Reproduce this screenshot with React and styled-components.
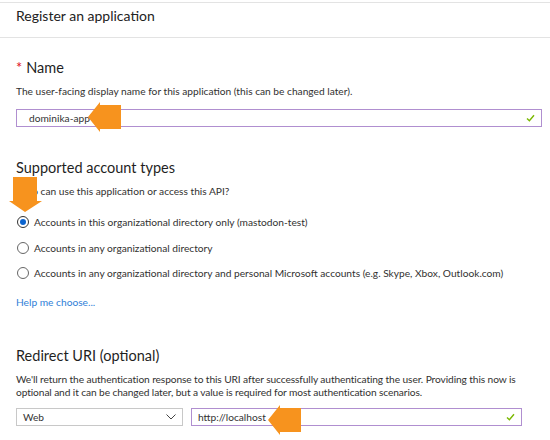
import styled, { createGlobalStyle } from 'styled-components'

const GlobalStyle = createGlobalStyle`
  body {
    margin: 0;
    background: #fff;
    font-family: Lato, "Liberation Sans", sans-serif;
    color: #323130;
  }
`

const Page = styled.div`
  position: relative;
  width: 550px;
  height: 440px;
  overflow: hidden;
`

const Header = styled.div`
  margin-top: 2px;
  height: 36px;
  border-top: 1px solid #e3e3e3;
  border-bottom: 1px solid #e3e3e3;
  padding: 3px 16px 0;
  box-sizing: border-box;
  font-size: 14px;
  line-height: 20px;
  color: #222;
`

const Content = styled.div`
  padding: 0 16px;
`

const SectionTitle = styled.h2`
  margin: ${p => p.$top}px 0 0;
  font-size: 14.5px;
  font-weight: 400;
  line-height: 22px;
  color: #1f1f1f;

  span {
    color: #e00b1c;
    margin-right: 4px;
  }
`

const Text = styled.p`
  margin: ${p => p.$top || 6}px 0 0;
  font-size: 10.2px;
  line-height: 13px;
  letter-spacing: ${p => p.$tight ? '-0.1px' : '0'};
  white-space: nowrap;
`

const Field = styled.div`
  margin-top: ${p => p.$top}px;
  width: ${p => p.$width}px;
  height: 18px;
  box-sizing: border-box;
  border: 1px solid ${p => (p.$valid ? '#b08fd0' : '#c8c8c8')};
  display: flex;
  align-items: center;
  justify-content: space-between;
  padding: 0 6px 0 ${p => p.$pad || 6}px;
  font-size: 10.2px;
  color: #333;
  background: #fff;
`

const RadioList = styled.div`
  margin-top: 16px;
  display: flex;
  flex-direction: column;
  gap: 9.5px;
`

const RadioRow = styled.label`
  display: flex;
  align-items: center;
  gap: 5px;
  height: 16px;
  font-size: 10.2px;
  white-space: nowrap;
`

const RadioCircle = styled.span`
  width: 12px;
  height: 12px;
  box-sizing: border-box;
  border-radius: 50%;
  border: 1px solid ${p => (p.$checked ? '#333' : '#666')};
  margin-left: 1px;
  display: flex;
  align-items: center;
  justify-content: center;

  &::after {
    content: "";
    width: 6px;
    height: 6px;
    border-radius: 50%;
    background: ${p => (p.$checked ? '#0b63ce' : 'transparent')};
  }
`

const Link = styled.a`
  display: block;
  margin-top: 14px;
  font-size: 10.2px;
  line-height: 14px;
  color: #2f80d8;
  text-decoration: none;
`

const Row = styled.div`
  display: flex;
  gap: 8px;
  margin-top: 9px;
`

const Arrow = styled.svg`
  position: absolute;
  left: ${p => p.$x}px;
  top: ${p => p.$y}px;
`

const ORANGE = '#f7931e'

function Check() {
  return (
    <svg width="9" height="8" viewBox="0 0 9 8">
      <path d="M1 4.5 L3.4 6.8 L8 1.2" fill="none" stroke="#7ab800" strokeWidth="1.4" />
    </svg>
  )
}

function Chevron() {
  return (
    <svg width="10" height="6" viewBox="0 0 10 6">
      <path d="M0.5 0.5 L5 5 L9.5 0.5" fill="none" stroke="#444" strokeWidth="1" />
    </svg>
  )
}

function LeftArrow({ x, y }) {
  return (
    <Arrow $x={x} $y={y} width="34" height="32" viewBox="0 0 34 32">
      <polygon points="0,16 12,1 12,4 33,4 33,28 12,28 12,31" fill={ORANGE} />
    </Arrow>
  )
}

function DownArrow({ x, y }) {
  return (
    <Arrow $x={x} $y={y} width="34" height="36" viewBox="0 0 34 36">
      <polygon points="4,0 28,0 28,24 33,24 16,35 0,24 4,24" fill={ORANGE} />
    </Arrow>
  )
}

const accountTypes = [
  { label: 'Accounts in this organizational directory only (mastodon-test)', checked: true },
  { label: 'Accounts in any organizational directory', checked: false },
  { label: 'Accounts in any organizational directory and personal Microsoft accounts (e.g. Skype, Xbox, Outlook.com)', checked: false },
]

export default function App() {
  return (
    <Page>
      <GlobalStyle />
      <Header>Register an application</Header>
      <Content>
        <SectionTitle $top={19}><span>*</span>Name</SectionTitle>
        <Text>The user-facing display name for this application (this can be changed later).</Text>
        <Field $top={11} $width={526} $valid $pad={12}>
          dominika-app
          <Check />
        </Field>

        <SectionTitle $top={30}>Supported account types</SectionTitle>
        <Text>Who can use this application or access this API?</Text>
        <RadioList>
          {accountTypes.map(t => (
            <RadioRow key={t.label}>
              <RadioCircle $checked={t.checked} />
              {t.label}
            </RadioRow>
          ))}
        </RadioList>
        <Link href="#">Help me choose...</Link>

        <SectionTitle $top={36}>Redirect URI (optional)</SectionTitle>
        <Text $top={6} $tight>
          We'll return the authentication response to this URI after successfully authenticating the user. Providing this now is
          <br />
          optional and it can be changed later, but a value is required for most authentication scenarios.
        </Text>
        <Row>
          <Field $width={167} $pad={6}>
            Web
            <Chevron />
          </Field>
          <Field $width={331} $valid>
            http://localhost
            <Check />
          </Field>
        </Row>
      </Content>

      <LeftArrow x={88} y={101} />
      <DownArrow x={9} y={177} />
      <LeftArrow x={268} y={404} />
    </Page>
  )
}
